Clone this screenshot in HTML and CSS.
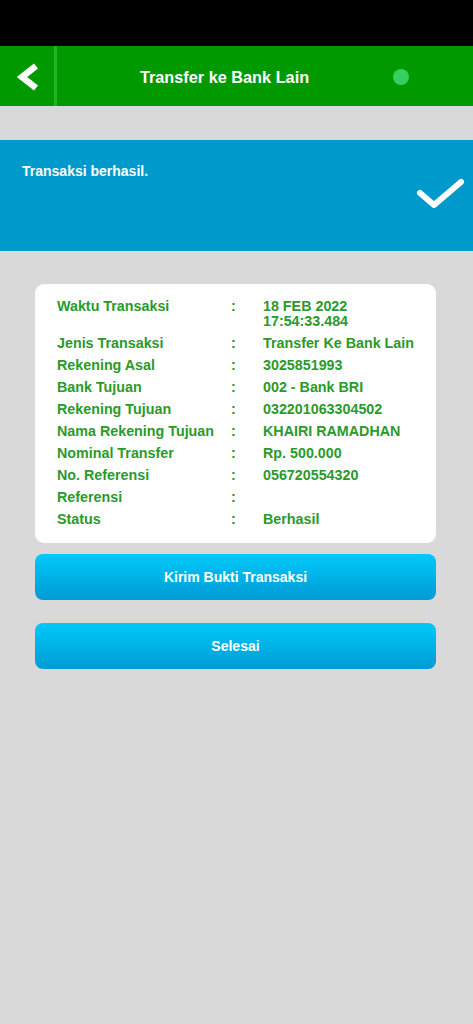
FILE: index.html
```html
<!DOCTYPE html>
<html lang="id">
<head>
<meta charset="utf-8">
<title>Transfer ke Bank Lain</title>
<link rel="stylesheet" href="styles.css">
</head>
<body>
<div class="statusbar"></div>
<header class="topbar">
  <div class="back">
    <svg width="26" height="28" viewBox="0 0 26 28"><polyline points="20,3 6,14 20,25" fill="none" stroke="#fff" stroke-width="6.5" stroke-linejoin="miter"/></svg>
  </div>
  <div class="title">Transfer ke Bank Lain</div>
  <div class="dot-wrap"><span class="dot"></span></div>
</header>
<section class="banner">
  <div class="banner-text">Transaksi berhasil.</div>
  <svg class="check" width="52" height="40" viewBox="0 0 52 40"><polyline points="7,17 21,29 48,6" fill="none" stroke="#fff" stroke-width="6" stroke-linecap="round" stroke-linejoin="round"/></svg>
</section>
<main class="content">
  <div class="card">
    <div class="row"><div class="lbl">Waktu Transaksi</div><div class="col">:</div><div class="val">18 FEB 2022<br>17:54:33.484</div></div>
    <div class="row"><div class="lbl">Jenis Transaksi</div><div class="col">:</div><div class="val">Transfer Ke Bank Lain</div></div>
    <div class="row"><div class="lbl">Rekening Asal</div><div class="col">:</div><div class="val">3025851993</div></div>
    <div class="row"><div class="lbl">Bank Tujuan</div><div class="col">:</div><div class="val">002 - Bank BRI</div></div>
    <div class="row"><div class="lbl">Rekening Tujuan</div><div class="col">:</div><div class="val">032201063304502</div></div>
    <div class="row"><div class="lbl">Nama Rekening Tujuan</div><div class="col">:</div><div class="val">KHAIRI RAMADHAN</div></div>
    <div class="row"><div class="lbl">Nominal Transfer</div><div class="col">:</div><div class="val">Rp. 500.000</div></div>
    <div class="row"><div class="lbl">No. Referensi</div><div class="col">:</div><div class="val">056720554320</div></div>
    <div class="row"><div class="lbl">Referensi</div><div class="col">:</div><div class="val"></div></div>
    <div class="row"><div class="lbl">Status</div><div class="col">:</div><div class="val">Berhasil</div></div>
  </div>
  <button class="btn btn-first">Kirim Bukti Transaksi</button>
  <button class="btn btn-second">Selesai</button>
</main>
</body>
</html>
```
FILE: styles.css
```css
html, body {
  margin: 0;
  padding: 0;
}
body {
  background: #d9d9d9;
  font-family: "Liberation Sans", Arial, sans-serif;
  width: 473px;
  min-height: 1024px;
}
.statusbar {
  height: 46px;
  background: #000;
}
.topbar {
  height: 60px;
  background: #009a00;
  display: flex;
  align-items: stretch;
}
.back {
  width: 57px;
  display: flex;
  align-items: center;
  padding-left: 16px;
  padding-top: 2px;
  box-sizing: border-box;
  border-right: 3px solid #22b522;
}
.back svg {
  display: block;
}
.title {
  flex: 1;
  color: #fff;
  font-weight: bold;
  font-size: 16.3px;
  display: flex;
  align-items: center;
  justify-content: center;
  padding-top: 2px;
}
.dot-wrap {
  width: 81px;
  display: flex;
  align-items: center;
  padding-left: 1px;
  padding-top: 2px;
  box-sizing: border-box;
}
.dot {
  width: 16px;
  height: 16px;
  border-radius: 50%;
  background: #35cf62;
}
.banner {
  margin-top: 34px;
  height: 111px;
  background: #0099cc;
  display: flex;
  justify-content: space-between;
  box-sizing: border-box;
  padding: 23px 8px 0 22px;
}
.banner-text {
  color: #fff;
  font-weight: bold;
  font-size: 14px;
  line-height: 16px;
}
.check {
  margin-top: 13px;
}
.content {
  padding: 33px 37px 0 35px;
}
.card {
  background: #fff;
  border-radius: 9px;
  padding: 11px 10px 13px 22px;
}
.row {
  display: grid;
  grid-template-columns: 174px 32px 1fr;
  padding: 3.5px 0;
  line-height: 15px;
  color: #2a9a2a;
  font-weight: bold;
  font-size: 14.3px;
}
.btn {
  display: block;
  width: 100%;
  height: 46px;
  border: none;
  border-radius: 8px;
  background: linear-gradient(#00c9f9, #009bd4);
  color: #fff;
  font-family: "Liberation Sans", Arial, sans-serif;
  font-weight: bold;
  font-size: 14px;
  cursor: pointer;
}
.btn-first {
  margin-top: 11px;
}
.btn-second {
  margin-top: 23px;
}
```
